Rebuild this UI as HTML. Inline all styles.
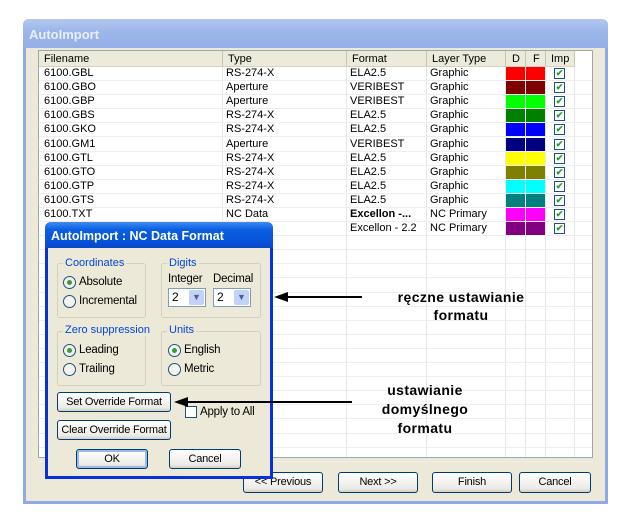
<!DOCTYPE html>
<html><head><meta charset="utf-8"><style>
*{box-sizing:border-box;margin:0;padding:0}
body{width:638px;height:524px;background:#fff;position:relative;overflow:hidden;font-family:"Liberation Sans",Arial,sans-serif;font-size:11px;color:#000}
.a{position:absolute}
#win{left:23px;top:19px;width:585px;height:485px;background:#ece9d8;border:3px solid #8ea9e6;border-top:none;border-radius:6px 6px 0 0}
#wt{left:23px;top:19px;width:585px;height:29px;background:linear-gradient(#b3c8f0,#9db7ea 40%,#94afe6);border-radius:7px 7px 0 0;color:#e8eefc;font-weight:bold;font-size:13px;padding:8px 0 0 6px}
#list{left:38px;top:50px;width:555px;height:408px;background:#fff;border:1px solid #9aa}
.hd{top:51px;height:16px;background:#ebeadb;border-right:1px solid #c8c5b5;border-bottom:1px solid #d6d2c2;padding:2px 0 0 5px;font-size:11px}
.r{left:39px;width:553px;height:14px;border-bottom:1px solid #eeeeee}
.vl{top:67px;height:390px;width:1px;background:#e8e8e8}
.c{font-size:11px;line-height:13px}
.sw{width:19px;height:13px}
.cb{width:11px;height:11px;border:1px solid #1c5180;background:#fff;color:#21a121;font-size:9px;line-height:9px;text-align:center;font-weight:bold}
.btn{background:linear-gradient(#fff,#ecebe6 80%,#d6d0c5);border:1px solid #003c74;border-radius:3px;text-align:center;font-size:11px;line-height:18px;letter-spacing:-.2px;white-space:nowrap}
#dlg{left:45px;top:222px;width:228px;height:257px;background:#ece9d8;border:3px solid #0831d9;border-top:none;border-radius:6px 6px 0 0}
#dt{left:45px;top:222px;width:228px;height:26px;background:linear-gradient(#3d8bf5,#0a5fe0 30%,#0550d8 80%,#0a48c8);border-radius:7px 7px 0 0;color:#fff;font-weight:bold;font-size:12.5px;padding:7px 0 0 6px}
.gb{border:1px solid #d0d0bf;border-radius:3px}
.gl{background:#ece9d8;color:#0046d5;font-size:11px;padding:0 2px;line-height:12px}
.rd{width:13px;height:13px;border-radius:50%;border:1px solid #1c5180;background:#f4f4ef}
.rd.on::after{content:"";position:absolute;left:3px;top:3px;width:5px;height:5px;border-radius:50%;background:#3a9b3a}
.sel{width:38px;height:19px;border:1px solid #7f9db9;background:#fff;font-size:12px;padding:1px 0 0 3px}
.sel i{position:absolute;right:1px;top:1px;width:15px;height:15px;background:#c1d3fb;border-radius:2px;color:#4d6185;font-style:normal;font-size:9px;text-align:center;line-height:15px}
.t{font-weight:bold;font-size:14px;letter-spacing:.4px;text-align:center;white-space:nowrap}
.lb{font-size:11.5px;letter-spacing:-.2px;line-height:15px}
</style></head><body>
<div class="a" id="win"></div>
<div class="a" id="wt">AutoImport</div>
<div class="a" id="list"></div>
<div class="a hd" style="left:39px;width:184px">Filename</div>
<div class="a hd" style="left:223px;width:124px">Type</div>
<div class="a hd" style="left:347px;width:80px">Format</div>
<div class="a hd" style="left:427px;width:79px">Layer Type</div>
<div class="a hd" style="left:506px;width:20px;padding-left:6px">D</div>
<div class="a hd" style="left:526px;width:20px;padding-left:7px">F</div>
<div class="a hd" style="left:546px;width:29px;padding-left:5px">Imp</div>
<div class="a vl" style="left:222px"></div><div class="a vl" style="left:346px"></div><div class="a vl" style="left:426px"></div><div class="a vl" style="left:505px"></div><div class="a vl" style="left:525px"></div><div class="a vl" style="left:545px"></div><div class="a vl" style="left:574px"></div>
<div id="rows"></div>
<script>
var d=[["6100.GBL","RS-274-X","ELA2.5","#ff0000"],["6100.GBO","Aperture","VERIBEST","#800000"],["6100.GBP","Aperture","VERIBEST","#00ff00"],["6100.GBS","RS-274-X","ELA2.5","#008000"],["6100.GKO","RS-274-X","ELA2.5","#0000ff"],["6100.GM1","Aperture","VERIBEST","#000080"],["6100.GTL","RS-274-X","ELA2.5","#ffff00"],["6100.GTO","RS-274-X","ELA2.5","#808000"],["6100.GTP","RS-274-X","ELA2.5","#00ffff"],["6100.GTS","RS-274-X","ELA2.5","#008080"],["6100.TXT","NC Data","<b>Excellon -...</b>","#ff00ff"],["","","Excellon - 2.2","#800080"]];
var h="";
for(var i=0;i<28;i++){var y=67+i*14.1;h+='<div class="a r" style="top:'+y+'px"></div>';
if(i<12){var e=d[i],lt=i<10?"Graphic":"NC Primary";
h+='<div class="a c" style="left:44px;top:'+y+'px">'+e[0]+'</div><div class="a c" style="left:226px;top:'+y+'px">'+e[1]+'</div><div class="a c" style="left:350px;top:'+y+'px">'+e[2]+'</div><div class="a c" style="left:430px;top:'+y+'px">'+lt+'</div><div class="a sw" style="left:506px;top:'+y+'px;background:'+e[3]+'"></div><div class="a sw" style="left:526px;top:'+y+'px;background:'+e[3]+'"></div><div class="a cb" style="left:554px;top:'+(y+1)+'px">✔</div>';}}
document.getElementById("rows").innerHTML=h;
</script>
<div class="a btn" style="left:243px;top:472px;width:80px;height:21px">&lt;&lt; Previous</div>
<div class="a btn" style="left:338px;top:472px;width:80px;height:21px">Next &gt;&gt;</div>
<div class="a btn" style="left:432px;top:472px;width:80px;height:21px">Finish</div>
<div class="a btn" style="left:519px;top:472px;width:72px;height:21px">Cancel</div>

<div class="a" id="dlg"></div>
<div class="a" id="dt">AutoImport : NC Data Format</div>
<div class="a gb" style="left:57px;top:263px;width:89px;height:55px"></div>
<div class="a gl" style="left:63px;top:257px">Coordinates</div>
<div class="a rd on" style="left:63px;top:276px"></div><div class="a lb" style="left:79px;top:275px">Absolute</div>
<div class="a rd" style="left:63px;top:295px"></div><div class="a lb" style="left:79px;top:294px">Incremental</div>
<div class="a gb" style="left:161px;top:263px;width:100px;height:55px"></div>
<div class="a gl" style="left:167px;top:257px">Digits</div>
<div class="a lb" style="left:168px;top:272px">Integer</div>
<div class="a lb" style="left:213px;top:272px">Decimal</div>
<div class="a sel" style="left:168px;top:288px">2<i>▼</i></div>
<div class="a sel" style="left:213px;top:288px">2<i>▼</i></div>
<div class="a gb" style="left:57px;top:331px;width:89px;height:55px"></div>
<div class="a gl" style="left:63px;top:324px">Zero suppression</div>
<div class="a rd on" style="left:63px;top:344px"></div><div class="a lb" style="left:79px;top:343px">Leading</div>
<div class="a rd" style="left:63px;top:363px"></div><div class="a lb" style="left:79px;top:362px">Trailing</div>
<div class="a gb" style="left:161px;top:331px;width:100px;height:55px"></div>
<div class="a gl" style="left:167px;top:324px">Units</div>
<div class="a rd on" style="left:168px;top:344px"></div><div class="a lb" style="left:184px;top:343px">English</div>
<div class="a rd" style="left:168px;top:363px"></div><div class="a lb" style="left:184px;top:362px">Metric</div>
<div class="a btn" style="left:57px;top:392px;width:114px;height:20px">Set Override Format</div>
<div class="a" style="left:185px;top:406px;width:12px;height:12px;border:1px solid #1c5180;background:#fff"></div>
<div class="a lb" style="left:200px;top:405px">Apply to All</div>
<div class="a btn" style="left:57px;top:420px;width:114px;height:20px">Clear Override Format</div>
<div class="a btn" style="left:76px;top:449px;width:72px;height:20px;border-color:#003c74;box-shadow:inset 0 0 0 2px #9cb9ef">OK</div>
<div class="a btn" style="left:169px;top:449px;width:72px;height:20px">Cancel</div>

<svg class="a" style="left:0;top:0" width="638" height="524">
<line x1="280" y1="297" x2="362" y2="297" stroke="#000" stroke-width="2"/>
<polygon points="274,297 288,292 288,302" fill="#000"/>
<line x1="180" y1="402" x2="352" y2="402" stroke="#000" stroke-width="2"/>
<polygon points="174,402 188,397 188,407" fill="#000"/>
</svg>
<div class="a t" style="left:361px;top:289px;width:200px">ręczne ustawianie</div>
<div class="a t" style="left:361px;top:307px;width:200px">formatu</div>
<div class="a t" style="left:325px;top:382px;width:200px">ustawianie</div>
<div class="a t" style="left:325px;top:401px;width:200px">domyślnego</div>
<div class="a t" style="left:325px;top:420px;width:200px">formatu</div>
</body></html>
